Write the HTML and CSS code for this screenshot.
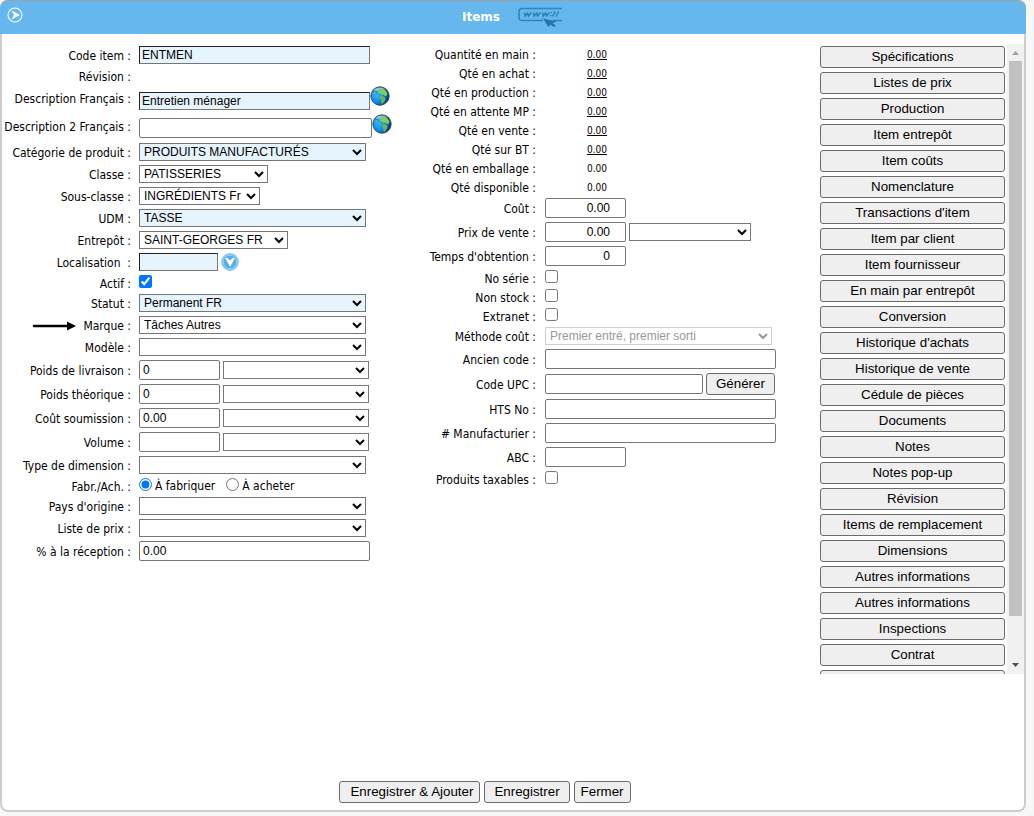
FILE: index.html
```html
<!DOCTYPE html>
<html lang="fr">
<head>
<meta charset="utf-8">
<title>Items</title>
<link rel="stylesheet" href="styles.css">
</head>
<body>
<svg class="defs" width="0" height="0" aria-hidden="true">
  <defs>
    <radialGradient id="sea" cx="32%" cy="50%" r="70%">
      <stop offset="0" stop-color="#35b4ff"/><stop offset=".55" stop-color="#0c80e6"/><stop offset="1" stop-color="#06245c"/>
    </radialGradient>
    <symbol id="globe" viewBox="0 0 20 20">
      <circle cx="10" cy="10" r="9.2" fill="url(#sea)" stroke="#30465c" stroke-width=".9"/>
      <path d="M3.500 4.500Q6 1.500 10 1.500q3 0 5 1.800Q12 5.500 9 4.800 6 5 3.500 4.500z" fill="#b9d9e6" opacity=".75"/>
      <path d="M8.500 3.500 12 2.500l3.200 1.600 2.300 3.400-.8 2.300-1.800.4-1.200-1.700-2 .6-1.600-1.500-1.600-.2-.8-1.700z" fill="#7fce5a"/>
      <path d="M10.500 9.500l2.500.7 2.500 1.800-.6 2.500-2.200 3.200-1.300-.4-.2-3.200-1.500-2z" fill="#69b944"/>
      <path d="M2.500 7.500 5 5.800l1 1.300-2 2.200z" fill="#58b98a"/>
    </symbol>
  </defs>
</svg>
<main class="window">
  <header class="titlebar">
    <button class="titlebar-toggle" type="button" aria-label="Afficher le menu">
      <svg width="16" height="16" viewBox="0 0 16 16"><circle cx="8" cy="8" r="7" fill="none" stroke="#fff" stroke-width="1.100"/><path d="M4.500 3.500 13 8 4.500 12.500 7 8z" fill="#fff"/></svg>
    </button>
    <h1 class="title">Items</h1>
    <svg class="www" width="44" height="20" viewBox="0 0 44 20" aria-hidden="true">
      <path d="M44 1.500H4Q1 1.500 1 4.500v6Q1 13.500 4 13.500h21M35 13.500h9" fill="none" stroke="#3584b8" stroke-width="1.500"/>
      <path d="M6.500 5.500 7.200 9l2.500-3 .8 3 3-3.500M15.500 5.500 16.200 9l2.500-3 .8 3 3-3.500M24.500 5.500 25.200 9l2.500-3 .8 3 3-3.500M33.200 5v1.200M32.700 8v1.200M34.500 9.500l2.700-5M38 9.500l2.700-5" fill="none" stroke="#2f7fb4" stroke-width="1.500"/>
      <path d="M25 11.500 38.500 14.500l-4 1.700 3.500 2.400-2.200 1.400-3.300-2.400-2 2.400z" fill="#2474aa"/>
    </svg>
  </header>

  <div class="content">
    <form class="column column-main" id="item-form">
      <div class="row"><label class="name" for="code">Code item :</label><div class="field"><input class="text full required" id="code" value="ENTMEN"></div></div>
      <div class="row row-label"><span class="name">Révision :</span></div>
      <div class="row row-globe"><label class="name" for="desc1">Description Français :</label><div class="field"><input class="text full required" id="desc1" value="Entretien ménager"><button class="icon-button" type="button" aria-label="Traductions"><svg width="20" height="20"><use href="#globe"/></svg></button></div></div>
      <div class="row row-globe"><label class="name" for="desc2">Description 2 Français :</label><div class="field"><input class="text extra" id="desc2"><button class="icon-button" type="button" aria-label="Traductions 2"><svg width="20" height="20"><use href="#globe"/></svg></button></div></div>
      <div class="row"><label class="name" for="cat">Catégorie de produit :</label><div class="field"><select class="select wide required" id="cat"><option>PRODUITS MANUFACTURÉS</option></select></div></div>
      <div class="row"><label class="name" for="classe">Classe :</label><div class="field"><select class="select class-size" id="classe"><option>PATISSERIES</option></select></div></div>
      <div class="row"><label class="name" for="sous">Sous-classe :</label><div class="field"><select class="select subclass-size" id="sous"><option>INGRÉDIENTS Fr</option></select></div></div>
      <div class="row"><label class="name" for="udm">UDM :</label><div class="field"><select class="select wide required" id="udm"><option>TASSE</option></select></div></div>
      <div class="row"><label class="name" for="entrepot">Entrepôt :</label><div class="field"><select class="select depot-size" id="entrepot"><option>SAINT-GEORGES FR</option></select></div></div>
      <div class="row"><label class="name" for="loc">Localisation &nbsp;:</label><div class="field"><input class="text short required" id="loc"><button class="icon-button" type="button" aria-label="Choisir la localisation"><svg width="18" height="18" viewBox="0 0 18 18"><circle cx="9" cy="9" r="8.200" fill="#55b0e8" stroke="#8fcdf2" stroke-width="1.400"/><circle cx="9" cy="9" r="6.800" fill="none" stroke="#c4e4f7" stroke-width=".6"/><path d="M4.200 5 6.500 5 9 7.600 11.500 5h2.300L9.200 14z" fill="#fff"/></svg></button></div></div>
      <div class="row row-check"><label class="name" for="actif">Actif :</label><div class="field"><input class="check" type="checkbox" id="actif" checked></div></div>
      <div class="row"><label class="name" for="statut">Statut :</label><div class="field"><select class="select wide required" id="statut"><option>Permanent FR</option></select></div></div>
      <div class="row"><label class="name" for="marque"><svg class="pointer" width="44" height="10" viewBox="0 0 44 10" aria-hidden="true"><path d="M2 5h34" stroke="#000" stroke-width="2.500" stroke-linecap="round"/><path d="M35 .5 44 5l-9 4.500z"/></svg>Marque :</label><div class="field"><select class="select wide" id="marque"><option>Tâches Autres</option></select></div></div>
      <div class="row"><label class="name" for="modele">Modèle :</label><div class="field"><select class="select wide" id="modele"><option></option></select></div></div>
      <div class="row"><label class="name" for="livraison">Poids de livraison :</label><div class="field"><input class="text small" id="livraison" value="0"><select class="select unit" aria-label="Unité du poids de livraison"><option></option></select></div></div>
      <div class="row"><label class="name" for="theorique">Poids théorique :</label><div class="field"><input class="text small" id="theorique" value="0"><select class="select unit" aria-label="Unité du poids théorique"><option></option></select></div></div>
      <div class="row"><label class="name" for="soumission">Coût soumission :</label><div class="field"><input class="text small" id="soumission" value="0.00"><select class="select unit" aria-label="Unité du coût"><option></option></select></div></div>
      <div class="row"><label class="name" for="volume">Volume :</label><div class="field"><input class="text small" id="volume"><select class="select unit" aria-label="Unité de volume"><option></option></select></div></div>
      <div class="row"><label class="name" for="dimension">Type de dimension :</label><div class="field"><select class="select wide" id="dimension"><option></option></select></div></div>
      <div class="row row-check"><span class="name">Fabr./Ach. :</span><div class="field"><input class="check" type="radio" name="source" id="fab" checked><label class="choice" for="fab">À fabriquer</label><input class="check" type="radio" name="source" id="ach"><label class="choice" for="ach">À acheter</label></div></div>
      <div class="row"><label class="name" for="pays">Pays d'origine :</label><div class="field"><select class="select wide" id="pays"><option></option></select></div></div>
      <div class="row"><label class="name" for="liste">Liste de prix :</label><div class="field"><select class="select wide" id="liste"><option></option></select></div></div>
      <div class="row"><label class="name" for="reception">% à la réception :</label><div class="field"><input class="text full" id="reception" value="0.00"></div></div>
    </form>

    <div class="column column-stock">
      <div class="row row-check"><span class="name">Quantité en main :</span><a class="amount" href="#main">0.00</a></div>
      <div class="row row-check"><span class="name">Qté en achat :</span><a class="amount" href="#achat">0.00</a></div>
      <div class="row row-check"><span class="name">Qté en production :</span><a class="amount" href="#production">0.00</a></div>
      <div class="row row-check"><span class="name">Qté en attente MP :</span><a class="amount" href="#attente">0.00</a></div>
      <div class="row row-check"><span class="name">Qté en vente :</span><a class="amount" href="#vente">0.00</a></div>
      <div class="row row-check"><span class="name">Qté sur BT :</span><a class="amount" href="#bt">0.00</a></div>
      <div class="row row-check"><span class="name">Qté en emballage :</span><span class="amount">0.00</span></div>
      <div class="row row-check"><span class="name">Qté disponible :</span><span class="amount">0.00</span></div>
      <div class="row"><label class="name" for="cout">Coût :</label><div class="field"><input class="text small number" id="cout" value="0.00"></div></div>
      <div class="row"><label class="name" for="prix">Prix de vente :</label><div class="field"><input class="text small number" id="prix" value="0.00"><select class="select price-unit" aria-label="Unité du prix"><option></option></select></div></div>
      <div class="row"><label class="name" for="temps">Temps d'obtention :</label><div class="field"><input class="text small number" id="temps" value="0"></div></div>
      <div class="row row-check"><label class="name" for="serie">No série :</label><div class="field"><input class="check" type="checkbox" id="serie"></div></div>
      <div class="row row-check"><label class="name" for="stock">Non stock :</label><div class="field"><input class="check" type="checkbox" id="stock"></div></div>
      <div class="row row-check"><label class="name" for="extranet">Extranet :</label><div class="field"><input class="check" type="checkbox" id="extranet"></div></div>
      <div class="row"><label class="name" for="methode">Méthode coût :</label><div class="field"><select class="select wide" id="methode" disabled><option>Premier entré, premier sorti</option></select></div></div>
      <div class="row"><label class="name" for="ancien">Ancien code :</label><div class="field"><input class="text full" id="ancien"></div></div>
      <div class="row"><label class="name" for="upc">Code UPC :</label><div class="field"><input class="text medium" id="upc"><button class="button generate" type="button">Générer</button></div></div>
      <div class="row"><label class="name" for="hts">HTS No :</label><div class="field"><input class="text full" id="hts"></div></div>
      <div class="row"><label class="name" for="fabricant"># Manufacturier :</label><div class="field"><input class="text full" id="fabricant"></div></div>
      <div class="row"><label class="name" for="abc">ABC :</label><div class="field"><input class="text small" id="abc"></div></div>
      <div class="row row-check"><label class="name" for="taxes">Produits taxables :</label><div class="field"><input class="check" type="checkbox" id="taxes"></div></div>
    </div>

    <aside class="panel">
      <nav class="panel-list" aria-label="Sections">
        <button class="button" type="button">Spécifications</button>
        <button class="button" type="button">Listes de prix</button>
        <button class="button" type="button">Production</button>
        <button class="button" type="button">Item entrepôt</button>
        <button class="button" type="button">Item coûts</button>
        <button class="button" type="button">Nomenclature</button>
        <button class="button" type="button">Transactions d'item</button>
        <button class="button" type="button">Item par client</button>
        <button class="button" type="button">Item fournisseur</button>
        <button class="button" type="button">En main par entrepôt</button>
        <button class="button" type="button">Conversion</button>
        <button class="button" type="button">Historique d'achats</button>
        <button class="button" type="button">Historique de vente</button>
        <button class="button" type="button">Cédule de pièces</button>
        <button class="button" type="button">Documents</button>
        <button class="button" type="button">Notes</button>
        <button class="button" type="button">Notes pop-up</button>
        <button class="button" type="button">Révision</button>
        <button class="button" type="button">Items de remplacement</button>
        <button class="button" type="button">Dimensions</button>
        <button class="button" type="button">Autres informations</button>
        <button class="button" type="button">Autres informations</button>
        <button class="button" type="button">Inspections</button>
        <button class="button" type="button">Contrat</button>
        <button class="button" type="button" aria-label="Suite"></button>
      </nav>
      <div class="scrollbar" aria-hidden="true">
        <svg width="17" height="17" viewBox="0 0 17 17"><path d="M5 11 8.500 7l3.500 4z" fill="#a3a3a3"/></svg>
        <div class="thumb"></div>
        <svg width="17" height="17" viewBox="0 0 17 17"><path d="M5 6h7l-3.500 4z" fill="#505050"/></svg>
      </div>
    </aside>
  </div>

  <footer class="actions">
    <button class="button save-add" type="submit" form="item-form">Enregistrer &amp; Ajouter</button>
    <button class="button save" type="submit" form="item-form">Enregistrer</button>
    <button class="button" type="button">Fermer</button>
  </footer>
</main>
</body>
</html>
```
FILE: styles.css
```css
* { box-sizing: border-box; }

body {
  margin: 0;
  background: #f7f7f7;
  color: #000;
  font-family: "DejaVu Sans Condensed", "Noto Sans", sans-serif;
  font-size: 12px;
}

.defs { position: absolute; }

.window {
  display: flex;
  flex-direction: column;
  min-height: calc(100vh - 4px);
  margin: 0 8px 4px 0;
  border: 2px solid #ccc;
  border-top: 0;
  border-radius: 8px;
  background: #fff;
}

.titlebar {
  display: flex;
  align-items: flex-start;
  height: 34px;
  margin: 0 -2px;
  padding: 6px 7px;
  border-top: 1px solid #a0a0a0;
  border-radius: 8px 8px 0 0;
  background: #65b7ee;
  color: #fff;
}

.titlebar-toggle,
.icon-button {
  display: block;
  padding: 0;
  border: 0;
  background: none;
  line-height: 0;
}

.title {
  flex: 1;
  margin: 0;
  padding-right: 18px;
  font: bold 12px/20px "DejaVu Sans", sans-serif;
  text-align: right;
}

.www { flex: 0 0 44px; margin-right: 457px; }

.content {
  display: flex;
  flex: 1;
  align-items: flex-start;
  padding-top: 10px;
}

.column { flex: 0 0 auto; width: 400px; }
.column-stock { margin-right: auto; }

.row {
  display: grid;
  grid-template-columns: 129px 1fr;
  column-gap: 8px;
  align-items: center;
  padding: 2px 0;
}

.column-stock .row { grid-template-columns: 134px 1fr; column-gap: 9px; }

.name {
  display: flex;
  align-items: center;
  justify-content: flex-end;
  padding-top: 2px;
  line-height: 16px;
  white-space: pre;
}

.pointer { margin-right: 7px; }

.field { display: flex; align-items: center; gap: 3px; }

.row-label { height: 20px; padding: 0; }

.row-check { height: 19px; padding: 2px 0 0; }
.row-check .name { padding-top: 1px; }
.row-check .field { align-items: flex-start; align-self: start; height: 15px; }

.row-globe { align-items: start; height: 27px; padding: 0; }
.row-globe .name { padding-top: 5px; }
.row-globe .field { align-items: flex-end; gap: 0; }
.row-globe .icon-button { padding-bottom: 4px; }
.row-globe + .row-globe { height: 28px; padding-top: 1px; }

.text,
.select {
  height: 20px;
  margin: 0;
  border: 1px solid #767676;
  background-color: #fff;
  color: #000;
  font: 12px "Liberation Sans", Arial, sans-serif;
}

.text { padding: 0 3px 1px; border-radius: 2px; }
.select { height: 18px; padding: 0; border-radius: 0; }
.select:disabled { border-color: #bbb; color: #6d6d6d; opacity: .7; }

.required { background-color: #e6f4fd; }

.text.required {
  height: 18px;
  padding: 0 2px;
  border-color: #222 #767676 #767676 #222;
  border-radius: 0;
}

.full { width: 231px; }
.extra { width: 233px; }
.wide { width: 227px; }
.medium { width: 158px; }
.small { width: 81px; }
.short { width: 79px; }
.unit { width: 146px; }
.price-unit { width: 122px; }
.class-size { width: 129px; }
.subclass-size { width: 121px; }
.depot-size { width: 149px; }
.text.number { padding-right: 15px; text-align: right; }

.check { width: 13px; height: 13px; margin: 0; }
.choice { margin-right: 8px; line-height: 17px; }

.amount {
  padding-left: 42px;
  color: #000;
  font-size: 10px;
}

.button {
  height: 22px;
  padding: 0 6px 2px;
  border: 1px solid #6b6b6b;
  border-radius: 3px;
  background: #efefef;
  color: #000;
  font-family: "Liberation Sans", Arial, sans-serif;
}

.generate { padding: 0 9px 2px; }

.panel { display: flex; width: 204px; height: 630px; }

.panel-list {
  display: flex;
  flex: 1;
  flex-direction: column;
  gap: 4px;
  padding: 2px 2px 0 0;
  overflow: hidden;
}

.panel-list .button { flex: 0 0 22px; }

.scrollbar {
  display: flex;
  flex: 0 0 17px;
  flex-direction: column;
  background: #f1f1f1;
}

.thumb { flex: 1; margin: 0 2px 41px; background: #c1c1c1; }

.actions {
  display: flex;
  justify-content: center;
  gap: 4px;
  padding: 8px 56px 7px 0;
}

.save-add { padding-left: 10px; }
.save { padding: 0 9px 2px; }
```
